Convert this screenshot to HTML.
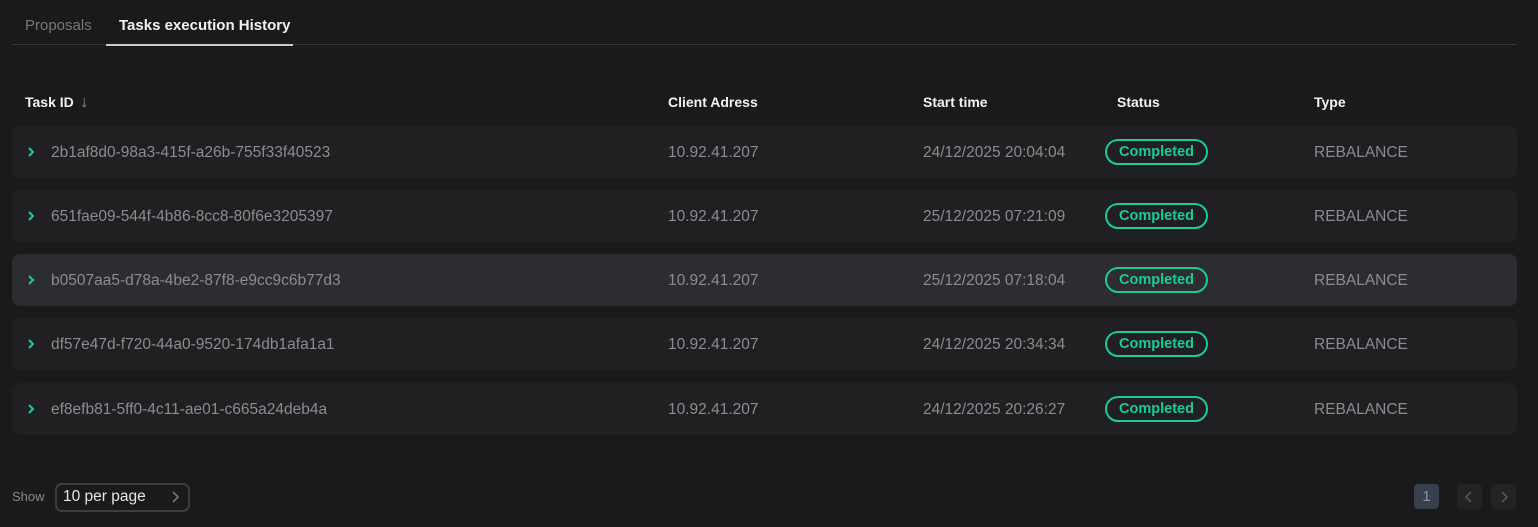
<!DOCTYPE html><html><head><style>
html,body{margin:0;background:#1a1a1b;width:1538px;height:527px;overflow:hidden}
body{font-family:"Liberation Sans",sans-serif;position:relative}
.a{position:absolute;white-space:nowrap}
.tab{top:17px;font-size:15px}
.h{top:94px;font-size:14px;font-weight:bold;color:#f2f2f2;line-height:17px}
.row{position:absolute;left:12px;width:1505px;height:52px;background:#202022;border-radius:8px}
.row .a{top:18px;font-size:15.5px;color:#8c8c90}
.badge{position:absolute;left:1093px;top:13px;width:99px;height:22px;border:2px solid #1cc99a;border-radius:13px;color:#1cc99a;font-weight:bold;font-size:14.5px;text-align:center;line-height:23px}
.chev{position:absolute;left:14px;top:20px}
</style></head><body>
<div class="a tab" style="left:25px;color:#77777b">Proposals</div>
<div class="a tab" style="left:119px;color:#f2f2f2;font-weight:bold">Tasks execution History</div>
<div class="a" style="left:12px;top:44px;width:1505px;height:1px;background:#33363b"></div>
<div class="a" style="left:106px;top:44px;width:187px;height:2px;background:#c8cacd"></div>
<div class="a h" style="left:25px">Task ID</div>
<div class="a" style="left:80px;top:92px;font-size:17px;line-height:20px;color:#8c8c90">↓</div>
<div class="a h" style="left:668px">Client Adress</div>
<div class="a h" style="left:923px">Start time</div>
<div class="a h" style="left:1117px">Status</div>
<div class="a h" style="left:1314px">Type</div>

<div class="row" style="top:126px"><svg class="chev" width="10" height="12"><path d="M3 2l4 4-4 4" stroke="#1cc99a" stroke-width="2" fill="none"/></svg><div class="a" style="left:39px">2b1af8d0-98a3-415f-a26b-755f33f40523</div><div class="a" style="left:656px">10.92.41.207</div><div class="a" style="left:911px">24/12/2025 20:04:04</div><div class="badge">Completed</div><div class="a" style="left:1302px">REBALANCE</div></div>
<div class="row" style="top:190px"><svg class="chev" width="10" height="12"><path d="M3 2l4 4-4 4" stroke="#1cc99a" stroke-width="2" fill="none"/></svg><div class="a" style="left:39px">651fae09-544f-4b86-8cc8-80f6e3205397</div><div class="a" style="left:656px">10.92.41.207</div><div class="a" style="left:911px">25/12/2025 07:21:09</div><div class="badge">Completed</div><div class="a" style="left:1302px">REBALANCE</div></div>
<div class="row" style="top:254px;background:#2c2d31"><svg class="chev" width="10" height="12"><path d="M3 2l4 4-4 4" stroke="#1cc99a" stroke-width="2" fill="none"/></svg><div class="a" style="left:39px">b0507aa5-d78a-4be2-87f8-e9cc9c6b77d3</div><div class="a" style="left:656px">10.92.41.207</div><div class="a" style="left:911px">25/12/2025 07:18:04</div><div class="badge">Completed</div><div class="a" style="left:1302px">REBALANCE</div></div>
<div class="row" style="top:318px"><svg class="chev" width="10" height="12"><path d="M3 2l4 4-4 4" stroke="#1cc99a" stroke-width="2" fill="none"/></svg><div class="a" style="left:39px">df57e47d-f720-44a0-9520-174db1afa1a1</div><div class="a" style="left:656px">10.92.41.207</div><div class="a" style="left:911px">24/12/2025 20:34:34</div><div class="badge">Completed</div><div class="a" style="left:1302px">REBALANCE</div></div>
<div class="row" style="top:383px"><svg class="chev" width="10" height="12"><path d="M3 2l4 4-4 4" stroke="#1cc99a" stroke-width="2" fill="none"/></svg><div class="a" style="left:39px">ef8efb81-5ff0-4c11-ae01-c665a24deb4a</div><div class="a" style="left:656px">10.92.41.207</div><div class="a" style="left:911px">24/12/2025 20:26:27</div><div class="badge">Completed</div><div class="a" style="left:1302px">REBALANCE</div></div>

<div class="a" style="left:12px;top:489px;font-size:13px;color:#8c8c90">Show</div>
<div class="a" style="left:55px;top:483px;width:131px;height:25px;border:2px solid #393d44;border-radius:7px"></div>
<div class="a" style="left:63px;top:488px;font-size:15.5px;color:#e6e6e6">10 per page</div>
<svg class="a" style="left:170px;top:490px" width="10" height="14"><path d="M3 2l5 5-5 5" stroke="#7a7d83" stroke-width="1.5" fill="none"/></svg>
<div class="a" style="left:1414px;top:484px;width:25px;height:25px;background:#37404c;border-radius:4px;color:#8d96a0;font-size:15px;text-align:center;line-height:25px">1</div>
<div class="a" style="left:1457px;top:484px;width:25px;height:25px;background:#222325;border-radius:4px"></div>
<div class="a" style="left:1491px;top:484px;width:25px;height:25px;background:#222325;border-radius:4px"></div>
<svg class="a" style="left:1464px;top:490px" width="10" height="14"><path d="M7 2l-5 5 5 5" stroke="#55585e" stroke-width="1.5" fill="none"/></svg>
<svg class="a" style="left:1499px;top:490px" width="10" height="14"><path d="M3 2l5 5-5 5" stroke="#55585e" stroke-width="1.5" fill="none"/></svg>
</body></html>
